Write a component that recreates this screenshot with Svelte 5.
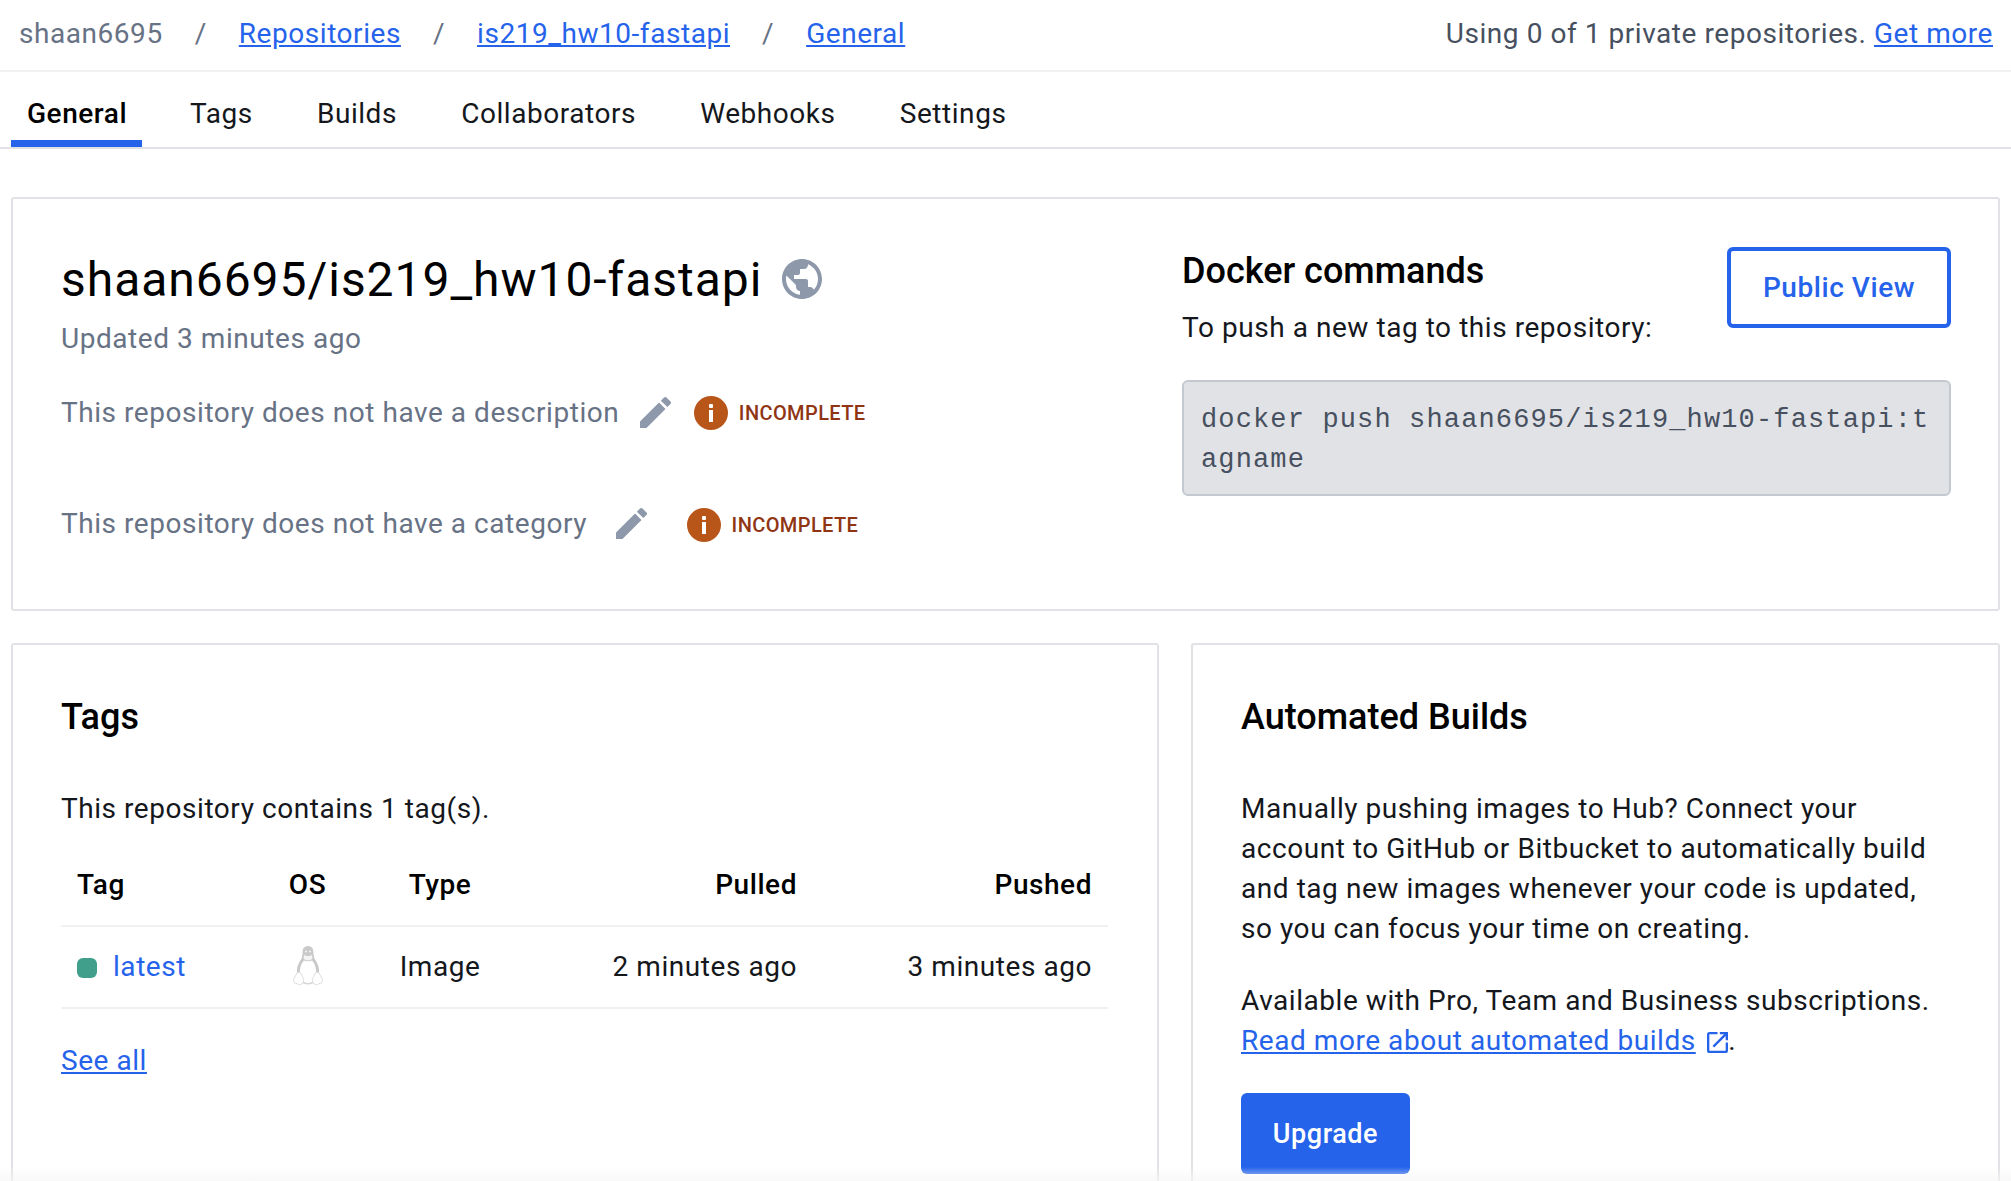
<script lang="ts">
	const tabs = ['General', 'Tags', 'Builds', 'Collaborators', 'Webhooks', 'Settings'];
	const pencil =
		'M3 17.25V21h3.75L17.81 9.94l-3.75-3.75L3 17.25zM20.71 7.04c.39-.39.39-1.02 0-1.41l-2.34-2.34c-.39-.39-1.02-.39-1.41 0l-1.83 1.83 3.75 3.75 1.83-1.83z';
</script>

{#snippet incomplete()}
	<span class="status">
		<svg class="info" viewBox="0 0 34 34">
			<circle cx="17" cy="17" r="17" fill="#b8561a" />
			<rect x="15" y="14" width="4" height="12" fill="#fff" />
			<rect x="15" y="8" width="4" height="4" rx="1" fill="#fff" />
		</svg>
		<span>INCOMPLETE</span>
	</span>
{/snippet}

<div class="page">
	<header class="topbar">
		<nav class="crumbs">
			<span class="user">shaan6695</span>
			<span class="sep">/</span>
			<a href="#a">Repositories</a>
			<span class="sep">/</span>
			<a href="#a">is219_hw10-fastapi</a>
			<span class="sep">/</span>
			<a href="#a">General</a>
		</nav>
		<div class="usage">Using 0 of 1 private repositories. <a href="#a">Get more</a></div>
	</header>

	<nav class="tabs">
		{#each tabs as tab, i}
			<button class="tab" class:active={i === 0}>{tab}</button>
		{/each}
	</nav>

	<main class="content">
		<section class="card summary">
			<div class="info-col">
				<div class="title">
					<h1>shaan6695/is219_hw10-fastapi</h1>
					<svg class="globe" viewBox="2 2 20 20">
						<path
							fill="#8d98aa"
							d="M12 2C6.48 2 2 6.48 2 12s4.48 10 10 10 10-4.48 10-10S17.52 2 12 2zm-1 17.93c-3.95-.49-7-3.85-7-7.93 0-.62.08-1.21.21-1.79L9 15v1c0 1.1.9 2 2 2v1.93zm6.9-2.54c-.26-.81-1-1.39-1.9-1.39h-1v-3c0-.55-.45-1-1-1H8v-2h2c.55 0 1-.45 1-1V7h2c1.1 0 2-.9 2-2v-.41c2.93 1.19 5 4.06 5 7.41 0 2.08-.8 3.97-2.1 5.39z"
						/>
					</svg>
				</div>
				<div class="updated">Updated 3 minutes ago</div>
				<div class="meta desc">
					<span>This repository does not have a description</span>
					<svg class="pencil" viewBox="3 3 18 18"><path fill="#8d98aa" d={pencil} /></svg>
					{@render incomplete()}
				</div>
				<div class="meta cat">
					<span>This repository does not have a category</span>
					<svg class="pencil" viewBox="3 3 18 18"><path fill="#8d98aa" d={pencil} /></svg>
					{@render incomplete()}
				</div>
			</div>
			<div class="docker-col">
				<div class="docker-head">
					<div>
						<h2>Docker commands</h2>
						<p>To push a new tag to this repository:</p>
					</div>
					<button class="outline">Public View</button>
				</div>
				<code>docker push shaan6695/is219_hw10-fastapi:tagname</code>
			</div>
		</section>

		<div class="columns">
			<section class="card tags">
				<h3>Tags</h3>
				<p class="lead">This repository contains 1 tag(s).</p>
				<table>
					<thead>
						<tr>
							<th class="c-tag">Tag</th>
							<th class="c-os">OS</th>
							<th class="c-type">Type</th>
							<th class="c-pulled">Pulled</th>
							<th class="c-pushed">Pushed</th>
						</tr>
					</thead>
					<tbody>
						<tr>
							<td class="c-tag"><span class="dot"></span><a class="plain" href="#a">latest</a></td>
							<td class="c-os">
								<svg class="tux" viewBox="0 0 32 40">
									<path fill="#c9c9c9" d="M16 0c-4 0-5.5 3-5.5 7 0 3-.5 5-2.5 8-2 3-3.5 7-3 12l3 2c-.5-5 .5-11 4-14.500 1.500 1 6.500 1 8 0 3.500 3.500 4.500 9.500 4 14.500l3-2c.5-5-1-9-3-12-2-3-2.500-5-2.500-8 0-4-1.500-7-5.500-7z" />
									<path fill="#f4f4f4" d="M12.500 8.500c1 2 6 2 7 0l1 4c-2 2.500-7 2.500-9 0z" />
									<circle cx="14" cy="5.500" r="1" fill="#f4f4f4" />
									<circle cx="18" cy="5.500" r="1" fill="#f4f4f4" />
									<path fill="#fff" stroke="#dedede" stroke-width="1" d="M5 27l-3.500 6.500.5 3 6 2.500 3.500-2.500-.5-5-3-5.500zM27 27l3.500 6.500-.5 3-6 2.500-3.500-2.500.5-5 3-5.500z" />
									<path fill="none" stroke="#d8d8d8" stroke-width="1.500" d="M11 36.500c3 1.500 7 1.500 10 0" />
								</svg>
							</td>
							<td class="c-type">Image</td>
							<td class="c-pulled">2 minutes ago</td>
							<td class="c-pushed">3 minutes ago</td>
						</tr>
					</tbody>
				</table>
				<a class="see-all" href="#a">See all</a>
			</section>

			<section class="card builds">
				<h3>Automated Builds</h3>
				<p class="lead">
					Manually pushing images to Hub? Connect your account to GitHub or Bitbucket to
					automatically build and tag new images whenever your code is updated, so you can focus
					your time on creating.
				</p>
				<p class="avail">
					Available with Pro, Team and Business subscriptions.
					<a href="#a">Read more about automated builds</a>
					<svg class="ext" viewBox="3 3 18 18">
						<path
							fill="#2563eb"
							d="M19 19H5V5h7V3H5c-1.110 0-2 .9-2 2v14c0 1.100.89 2 2 2h14c1.100 0 2-.9 2-2v-7h-2v7zM14 3v2h3.590l-9.830 9.830 1.410 1.410L19 6.410V10h2V3h-7z"
						/>
					</svg>.
				</p>
				<button class="primary">Upgrade</button>
			</section>
		</div>
	</main>
	<div class="fade"></div>
</div>

<style>
	:global(body) {
		margin: 0;
		background: #fff;
	}

	.page {
		position: relative;
		height: 1181px;
		overflow: hidden;
		font-family: Roboto, sans-serif;
		font-size: 28px;
		letter-spacing: 0.55px;
		color: #14171c;
	}

	a {
		color: #2563eb;
	}

	h1,
	h2,
	h3,
	p {
		margin: 0;
	}

	.topbar {
		display: flex;
		justify-content: space-between;
		align-items: center;
		box-sizing: border-box;
		height: 72px;
		padding: 0 18px 4px 19px;
		border-bottom: 2px solid #f1f1f2;
	}

	.crumbs {
		display: flex;
		gap: 32px;
	}

	.user,
	.sep {
		color: #677285;
	}

	.usage {
		color: #47505f;
	}

	.tabs {
		display: flex;
		height: 75px;
		padding-left: 11px;
		border-bottom: 2px solid #e1e2e6;
	}

	.tab {
		padding: 14px 16px 0;
		margin-right: 32.2px;
		font: inherit;
		letter-spacing: inherit;
		color: #14171c;
		background: none;
		border: none;
		border-bottom: 7px solid transparent;
	}

	.tab.active {
		padding-right: 15px;
		margin-right: 31.8px;
		font-weight: 500;
		color: #000;
		border-bottom-color: #2563eb;
	}

	.content {
		display: flex;
		flex-direction: column;
		gap: 32px;
		padding: 48px 11px 0;
	}

	.card {
		box-sizing: border-box;
		padding: 48px;
		border: 2px solid #e1e2e6;
		border-radius: 3px;
		background: #fff;
	}

	.summary {
		display: flex;
		justify-content: space-between;
		height: 414px;
		padding-right: 47px;
	}

	.info-col {
		padding-top: 2px;
		color: #677285;
	}

	.title {
		display: flex;
		align-items: center;
		gap: 20px;
		height: 60px;
	}

	h1 {
		font-size: 48px;
		font-weight: 400;
		letter-spacing: 0.96px;
		color: #000;
	}

	.globe {
		width: 40px;
		height: 40px;
	}

	.updated {
		margin-top: 10px;
		line-height: 40px;
	}

	.meta {
		display: flex;
		align-items: center;
		height: 40px;
	}

	.desc {
		margin-top: 33px;
	}

	.cat {
		margin-top: 71px;
	}

	.pencil {
		width: 31px;
		height: 31px;
		margin-left: 21px;
	}

	.cat .pencil {
		margin-left: 29px;
	}

	.desc .status {
		margin: 2px 0 0 23px;
	}

	.cat .status {
		margin: 4px 0 0 40px;
	}

	.status {
		display: flex;
		align-items: center;
		gap: 10.5px;
		font-size: 20px;
		font-weight: 500;
		letter-spacing: 0.4px;
		color: #8f3514;
	}

	.info {
		width: 34px;
		height: 34px;
	}

	.docker-col {
		width: 769px;
	}

	.docker-head {
		display: flex;
		justify-content: space-between;
		align-items: flex-start;
		height: 133px;
	}

	h2 {
		font-size: 36px;
		font-weight: 500;
		line-height: 44px;
		letter-spacing: 0;
		color: #000;
		margin-top: 2px;
	}

	.docker-head p {
		margin-top: 15px;
		line-height: 40px;
	}

	.outline {
		box-sizing: border-box;
		width: 224px;
		height: 81px;
		font: inherit;
		font-weight: 500;
		letter-spacing: inherit;
		color: #2563eb;
		background: #fff;
		border: 4px solid #2563eb;
		border-radius: 6px;
	}

	code {
		display: block;
		box-sizing: border-box;
		height: 116px;
		padding: 18px 17px;
		font-family: 'Liberation Mono', monospace;
		font-size: 27px;
		line-height: 40px;
		letter-spacing: 1.14px;
		color: #47505f;
		word-break: break-all;
		background: #e1e2e6;
		border: 2px solid #c4c8d1;
		border-radius: 6px;
	}

	.columns {
		display: grid;
		grid-template-columns: 1148px 809px;
		gap: 32px;
	}

	.columns .card {
		height: 620px;
	}

	h3 {
		font-size: 36px;
		font-weight: 500;
		line-height: 48px;
		letter-spacing: 0;
		color: #000;
	}

	.lead {
		margin-top: 48px;
		line-height: 40px;
	}

	.builds .lead {
		line-height: 40.1px;
	}

	table {
		width: 1047px;
		margin-top: 16px;
		table-layout: fixed;
		border-collapse: collapse;
	}

	th {
		height: 81px;
		box-sizing: border-box;
		padding: 0 16px 1px;
		font-weight: 500;
		color: #000;
	}

	td {
		height: 82px;
		box-sizing: border-box;
		padding: 0 16px 2px;
	}

	thead tr,
	tbody tr {
		border-bottom: 2px solid #f1f1f2;
	}

	.c-tag {
		width: 215px;
		text-align: left;
	}

	.c-os {
		width: 64px;
		text-align: center;
	}

	th.c-os {
		padding: 0 1px 1px 0;
	}

	.c-type {
		width: 200px;
		text-align: center;
	}

	.c-pulled {
		width: 273px;
		text-align: right;
	}

	.c-pushed {
		text-align: right;
	}

	.dot {
		display: inline-block;
		width: 20px;
		height: 20px;
		margin-right: 16px;
		border-radius: 6px;
		background: #3f9f8a;
		vertical-align: -2px;
	}

	.plain {
		text-decoration: none;
	}

	.tux {
		display: block;
		width: 32px;
		height: 40px;
		margin: 0 auto;
	}

	.see-all {
		display: inline-block;
		margin-top: 32px;
		line-height: 40px;
	}

	.avail {
		margin-top: 32px;
		line-height: 40px;
	}

	.ext {
		width: 21px;
		height: 21px;
		margin-left: 4px;
		vertical-align: -3px;
	}

	.primary {
		display: block;
		width: 169px;
		height: 81px;
		margin-top: 32px;
		font: inherit;
		font-size: 27px;
		font-weight: 500;
		letter-spacing: inherit;
		color: #fff;
		background: #2563eb;
		border: none;
		border-radius: 6px;
	}

	/* soft fade along the bottom edge of the window */
	.fade {
		position: absolute;
		left: 0;
		right: 0;
		bottom: 0;
		height: 14px;
		background: linear-gradient(rgba(245, 245, 245, 0), rgba(245, 245, 245, 0.7));
		pointer-events: none;
	}
</style>
